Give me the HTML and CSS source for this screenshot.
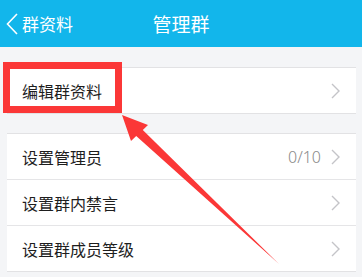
FILE: index.html
```html
<!DOCTYPE html>
<html lang="zh-CN">
<head>
    <meta charset="UTF-8">
    <meta name="viewport" content="width=device-width, initial-scale=1.0">
    <title>管理群</title>
    <link rel="stylesheet" href="styles.css">
</head>
<body>
    <div class="nav-bar">
        <div class="nav-back">
            <svg class="back-icon" width="12" height="22" viewBox="0 0 12 22">
                <polyline points="11,1 1.5,11 11,21" fill="none" stroke="#fff" stroke-width="1.6"/>
            </svg>
            <span>群资料</span>
        </div>
        <div class="nav-title">管理群</div>
        <div></div>
    </div>

    <div class="group first-group">
        <div class="row">
            <span class="row-label">编辑群资料</span>
            <span class="row-right">
                <svg class="chevron" width="9" height="16" viewBox="0 0 9 16"><polyline points="1,1 8,8 1,15" fill="none" stroke="#c4c4c8" stroke-width="1.4"/></svg>
            </span>
        </div>
    </div>

    <div class="group">
        <div class="row">
            <span class="row-label">设置管理员</span>
            <span class="row-right">
                <span class="row-value">0/10</span>
                <svg class="chevron" width="9" height="16" viewBox="0 0 9 16"><polyline points="1,1 8,8 1,15" fill="none" stroke="#c4c4c8" stroke-width="1.4"/></svg>
            </span>
        </div>
        <div class="row">
            <span class="row-label">设置群内禁言</span>
            <span class="row-right">
                <svg class="chevron" width="9" height="16" viewBox="0 0 9 16"><polyline points="1,1 8,8 1,15" fill="none" stroke="#c4c4c8" stroke-width="1.4"/></svg>
            </span>
        </div>
        <div class="row">
            <span class="row-label">设置群成员等级</span>
            <span class="row-right">
                <svg class="chevron" width="9" height="16" viewBox="0 0 9 16"><polyline points="1,1 8,8 1,15" fill="none" stroke="#c4c4c8" stroke-width="1.4"/></svg>
            </span>
        </div>
    </div>

    <!-- annotation drawn over the screenshot -->
    <div class="mark-box"></div>
    <svg class="mark-arrow" width="362" height="277" viewBox="0 0 362 277">
        <polygon points="122,115 148,125 142.8,129.9 279,264 136.2,136.1 131,141" fill="#fb3737"/>
    </svg>
</body>
</html>
```

FILE: styles.css
```css
body {
    margin: 0;
    background-color: #f4f5f7;
    font-family: "Noto Sans CJK SC", "Noto Sans", sans-serif;
    position: relative;
    height: 277px;
    overflow: hidden;
}
.nav-bar {
    height: 47px;
    background-color: #12b6eb;
    color: #fff;
    display: grid;
    grid-template-columns: 1fr auto 1fr;
    align-items: center;
}
.nav-back {
    display: flex;
    align-items: center;
    padding-left: 6px;
    font-size: 17px;
}
.back-icon {
    margin-right: 4px;
}
.nav-title {
    font-size: 19px;
}
.group {
    margin: 19px 6px 0 7px;
    background-color: #fff;
    border-top: 1px solid #e2e2e4;
    border-bottom: 1px solid #e2e2e4;
}
.first-group {
    margin-top: 20px;
}
.row {
    height: 45px;
    display: flex;
    align-items: center;
    justify-content: space-between;
    padding: 0 16px 0 15px;
}
.row + .row {
    border-top: 1px solid #e5e5e7;
}
.row-label {
    font-size: 16px;
    color: #1e1e1e;
}
.row-right {
    display: flex;
    align-items: center;
}
.row-value {
    font-family: "Noto Sans", sans-serif;
    font-size: 16px;
    font-weight: 300;
    color: #8a8a8a;
    margin-right: 10px;
}
.mark-box {
    position: absolute;
    left: 3px;
    top: 62px;
    width: 105px;
    height: 37px;
    border: 7px solid #fb3737;
}
.mark-arrow {
    position: absolute;
    left: 0;
    top: 0;
}
```
